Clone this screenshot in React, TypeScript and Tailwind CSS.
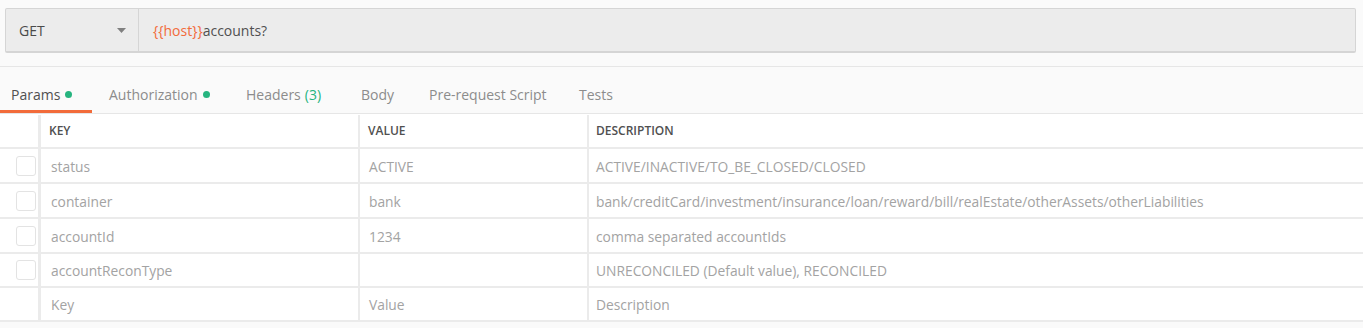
import React from 'react';

interface Param {
  key: string;
  value: string;
  description: string;
}

const params: Param[] = [
  { key: 'status', value: 'ACTIVE', description: 'ACTIVE/INACTIVE/TO_BE_CLOSED/CLOSED' },
  {
    key: 'container',
    value: 'bank',
    description:
      'bank/creditCard/investment/insurance/loan/reward/bill/realEstate/otherAssets/otherLiabilities',
  },
  { key: 'accountId', value: '1234', description: 'comma separated accountIds' },
  { key: 'accountReconType', value: '', description: 'UNRECONCILED (Default value), RECONCILED' },
];

const Dot = () => <span className="ml-[5px] inline-block h-[7px] w-[7px] rounded-full bg-[#26b47f]" />;

const tabs = [
  { label: 'Params', dot: true, w: 'w-[92px] pl-[11px]' },
  { label: 'Authorization', dot: true, w: 'w-[137px] pl-[17px]' },
  { label: 'Headers', count: '(3)', w: 'w-[115px] pl-[17px]' },
  { label: 'Body', w: 'w-[68px] pl-[17px]' },
  { label: 'Pre-request Script', w: 'w-[150px] pl-[17px]' },
  { label: 'Tests', w: 'w-[80px] pl-[17px]' },
];

const Row = ({ p, last, short }: { p?: Param; last?: boolean; short?: boolean }) => (
  <div
    className={
      'grid grid-cols-[41px_319px_229px_1fr] border-b-2 border-[#ebebeb] bg-white text-[13.8px] text-[#a3a3a3] ' +
      (short ? 'h-[34px]' : 'h-[35px]')
    }
  >
    <div className="flex items-center border-r-[3px] border-[#ebebeb] pl-[16px]">
      {!last && <div className="h-[20px] w-[20px] rounded-[3px] border border-[#e3e3e3] bg-white" />}
    </div>
    <div className="flex items-center border-r-2 border-[#ebebeb] pl-[10px] pt-[3px]">{p ? p.key : 'Key'}</div>
    <div className="flex items-center border-r-2 border-[#ebebeb] pl-[9px] pt-[3px]">{p ? p.value : 'Value'}</div>
    <div className="flex items-center truncate pl-[7px] pt-[3px]">{p ? p.description : 'Description'}</div>
  </div>
);

export default function App() {
  return (
    <div className="h-[328px] w-full overflow-hidden bg-[#fafafa]" style={{ fontFamily: '"Open Sans", "Liberation Sans", sans-serif' }}>
      <div className="px-[5px] pt-[8px]">
        <div className="flex h-[45px] w-[1351px] rounded-[2px] border border-b-2 border-[#d5d5d5] bg-[#ececec]">
          <div className="flex w-[133px] items-center justify-between border-r border-[#d5d5d5] pl-[13px] pr-[12px] text-[14px] text-[#4a4a4a]">
            <span>GET</span>
            <svg width="9" height="5" viewBox="0 0 9 5">
              <path d="M0 0h9L4.5 5z" fill="#808080" />
            </svg>
          </div>
          <div className="flex items-center pl-[14px] text-[14px] text-[#505050]">
            <span className="text-[#f26b3a]">{'{{host}}'}</span>
            <span>accounts?</span>
          </div>
        </div>
      </div>

      <div className="mt-[13px] flex h-[48px] border-t border-b border-[#e6e6e6]">
        {tabs.map((t, i) => (
          <div
            key={t.label}
            className={
              'flex items-center border-b-[3px] pt-[11px] text-[14px] ' +
              t.w +
              ' ' +
              (i === 0 ? 'border-[#f26b3a] text-[#505050]' : 'border-transparent text-[#8c8c8c]')
            }
          >
            <span>{t.label}</span>
            {t.count && <span className="ml-[4px] text-[#26b47f]">{t.count}</span>}
            {t.dot && <Dot />}
          </div>
        ))}
      </div>

      <div className="grid h-[35px] grid-cols-[41px_319px_229px_1fr] border-b-2 border-[#ebebeb] bg-white pt-[1px] text-[12px] font-semibold text-[#505050]">
        <div className="border-r-[3px] border-[#ebebeb]" />
        <div className="flex items-center border-r-2 border-[#ebebeb] pl-[8px]">KEY</div>
        <div className="flex items-center border-r-2 border-[#ebebeb] pl-[8px]">VALUE</div>
        <div className="flex items-center pl-[7px]">DESCRIPTION</div>
      </div>
      {params.map((p, i) => (
        <Row key={p.key} p={p} short={i === 3} />
      ))}
      <Row last short />
    </div>
  );
}
